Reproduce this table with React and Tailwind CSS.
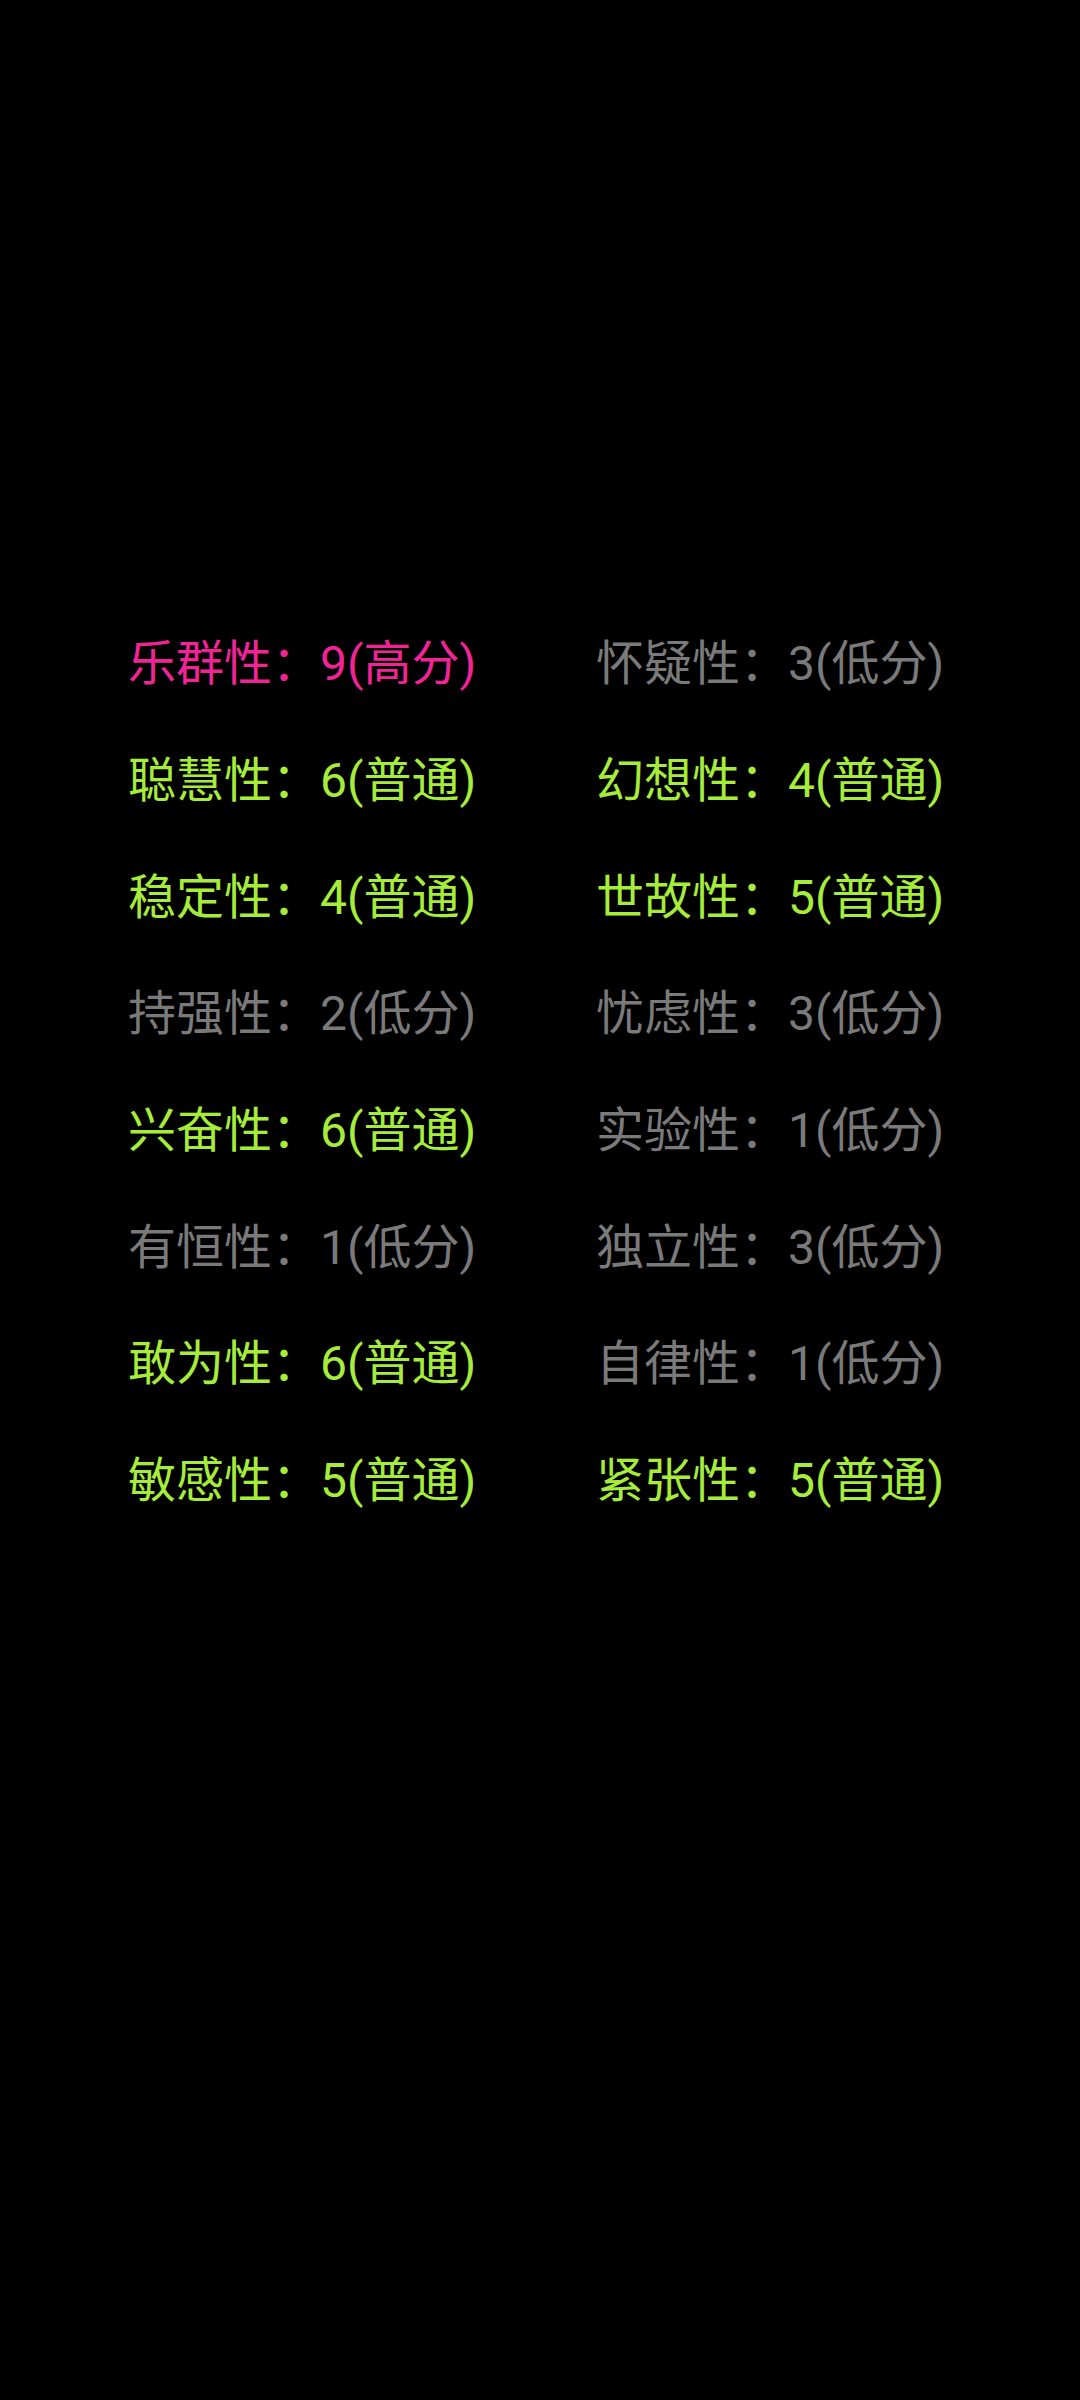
import React from "react";

const PINK = "text-[#f02496]";
const GREEN = "text-[#a6ec3a]";
const GRAY = "text-[#7a7a7a]";

const rows = [
  [["乐群性：9(高分)", PINK], ["怀疑性：3(低分)", GRAY]],
  [["聪慧性：6(普通)", GREEN], ["幻想性：4(普通)", GREEN]],
  [["稳定性：4(普通)", GREEN], ["世故性：5(普通)", GREEN]],
  [["持强性：2(低分)", GRAY], ["忧虑性：3(低分)", GRAY]],
  [["兴奋性：6(普通)", GREEN], ["实验性：1(低分)", GRAY]],
  [["有恒性：1(低分)", GRAY], ["独立性：3(低分)", GRAY]],
  [["敢为性：6(普通)", GREEN], ["自律性：1(低分)", GRAY]],
  [["敏感性：5(普通)", GREEN], ["紧张性：5(普通)", GREEN]],
];

export default function App() {
  return (
    <div
      className="w-[1080px] h-[2400px] bg-black pt-[606px] pl-[128px]"
      style={{ fontFamily: 'Roboto, "Noto Sans CJK SC", sans-serif' }}
    >
      <div className="grid grid-cols-[468px_auto]">
        {rows.map((r, i) => (
          <React.Fragment key={i}>
            {r.map(([t, c], j) => (
              <div
                key={j}
                className={`h-[116.7px] flex items-center text-[48px] leading-none whitespace-nowrap ${c}`}
              >
                {t}
              </div>
            ))}
          </React.Fragment>
        ))}
      </div>
    </div>
  );
}
